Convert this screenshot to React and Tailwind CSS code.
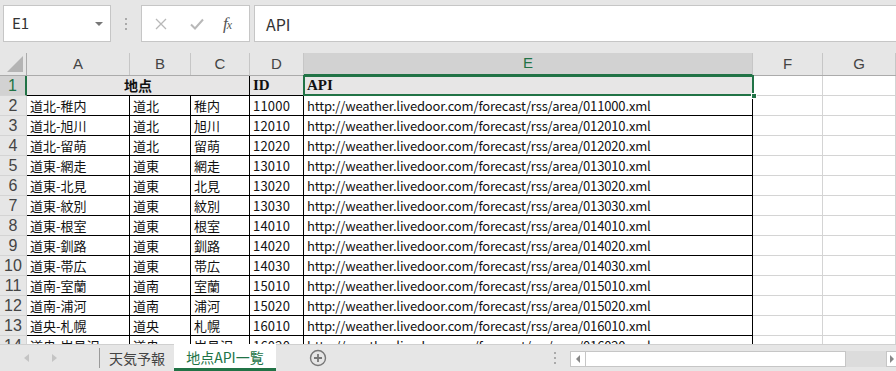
const COLS = [
  { key: 'A', w: 'w-[103px]' },
  { key: 'B', w: 'w-[61px]' },
  { key: 'C', w: 'w-[59px]' },
  { key: 'D', w: 'w-[54px]' },
  { key: 'E', w: 'w-[449px]' },
  { key: 'F', w: 'w-[70px]' },
  { key: 'G', w: 'flex-1' },
];

const ROWS = [
  ['道北-稚内', '道北', '稚内', '11000'],
  ['道北-旭川', '道北', '旭川', '12010'],
  ['道北-留萌', '道北', '留萌', '12020'],
  ['道東-網走', '道東', '網走', '13010'],
  ['道東-北見', '道東', '北見', '13020'],
  ['道東-紋別', '道東', '紋別', '13030'],
  ['道東-根室', '道東', '根室', '14010'],
  ['道東-釧路', '道東', '釧路', '14020'],
  ['道東-帯広', '道東', '帯広', '14030'],
  ['道南-室蘭', '道南', '室蘭', '15010'],
  ['道南-浦河', '道南', '浦河', '15020'],
  ['道央-札幌', '道央', '札幌', '16010'],
  ['道央-岩見沢', '道央', '岩見沢', '16020'],
];

const url = (id) => `http://weather.livedoor.com/forecast/rss/area/0${id}.xml`;

const FormulaBar = () => (
  <div className="h-[53px] shrink-0 bg-[#e6e6e6] flex items-start pt-[5px]">
    {/* Name box */}
    <div className="relative ml-[3px] w-[108px] h-[37px] bg-white border border-[#c6c6c6] flex items-center pl-[8px] text-[15px] text-[#333]">
      E1
      <div className="absolute right-[7px] top-[16px] w-0 h-0 border-l-[4px] border-r-[4px] border-t-[4px] border-l-transparent border-r-transparent border-t-[#777]" />
    </div>
    {/* grip dots */}
    <div className="ml-[14px] mt-[13px] flex flex-col gap-[3px]">
      <span className="w-[2px] h-[2px] bg-[#aaa]" />
      <span className="w-[2px] h-[2px] bg-[#aaa]" />
      <span className="w-[2px] h-[2px] bg-[#aaa]" />
    </div>
    {/* cancel / enter / fx */}
    <div className="ml-[14px] w-[109px] h-[37px] bg-white border border-[#c6c6c6] flex items-center">
      <svg width="12" height="12" viewBox="0 0 12 12" className="ml-[13px]">
        <path d="M1 1 L11 11 M11 1 L1 11" stroke="#b8b8b8" strokeWidth="1.3" fill="none" />
      </svg>
      <svg width="14" height="12" viewBox="0 0 14 12" className="ml-[23px]">
        <path d="M1 6.5 L5 10.5 L13 1.5" stroke="#b8b8b8" strokeWidth="2" fill="none" />
      </svg>
      <span className="ml-[19px] text-[17px] italic text-[#555] font-['Liberation_Serif',serif] tracking-[-1px] leading-none">
        f<span className="text-[12px]">x</span>
      </span>
    </div>
    <div className="ml-[4px] flex-1 -mr-[2px] h-[37px] bg-white border border-[#c6c6c6] flex items-center pl-[11px] text-[16px] text-[#333]">
      API
    </div>
  </div>
);

const HeaderRow = () => (
  <div className="h-[23px] shrink-0 flex bg-[#e6e6e6] border-b border-[#ababab] text-[15px] text-[#444] font-['Liberation_Sans',sans-serif]">
    <div className="relative w-[27px] border-r border-[#ababab]">
      <div className="absolute right-[3px] bottom-[3px] w-0 h-0" style={{ borderBottom: '16px solid #b4b4b4', borderLeft: '16px solid transparent' }} />
    </div>
    {COLS.map((c) => (
      <div
        key={c.key}
        className={`${c.w} flex items-center justify-center border-r border-[#c6c6c6] ${
          c.key === 'E' ? 'bg-[#d2d2d2] text-[#217346] border-b-2 border-b-[#217346] -mb-[1px]' : ''
        }`}
      >
        {c.key}
      </div>
    ))}
  </div>
);

const RowHead = ({ n, active }) => (
  <div
    className={`w-[27px] shrink-0 flex items-center justify-center border-b border-[#d4d4d4] text-[16px] font-['Liberation_Sans',sans-serif] ${
      active ? 'bg-[#d2d2d2] text-[#217346] border-r-2 border-r-[#217346]' : 'bg-[#e6e6e6] text-[#444] border-r border-[#ababab]'
    }`}
  >
    {n}
  </div>
);

const Cell = ({ w, children, className = '' }) => (
  <div className={`${w} shrink-0 flex items-center pl-[3px] whitespace-nowrap overflow-hidden border-r border-b border-black ${className}`}>
    {children}
  </div>
);

const Blank = ({ w }) => <div className={`${w} shrink-0 border-r border-b border-[#d4d4d4]`} />;

const Sheet = () => (
  <div className="flex-1 flex flex-col overflow-hidden bg-white">
    <HeaderRow />
    {/* row 1 */}
    <div className="h-[20px] shrink-0 flex text-[#111]">
      <RowHead n={1} active />
      <div className="w-[223px] shrink-0 flex items-center justify-center bg-[#e7e6e6] border-r border-b border-black font-bold text-[14px]">
        地点
      </div>
      <div className="w-[54px] shrink-0 flex items-center pl-[3px] bg-[#e7e6e6] border-r border-b border-black font-bold text-[15px] font-['Liberation_Serif',serif]">
        ID
      </div>
      <div className="relative w-[449px] shrink-0 flex items-center pl-[3px] bg-[#e7e6e6] border-b border-black font-bold text-[15px] font-['Liberation_Serif',serif]">
        API
        <div className="absolute -left-[1px] -top-[1px] -right-[1px] -bottom-[1px] border-2 border-[#217346]" />
        <div className="absolute -right-[4px] -bottom-[4px] w-[6px] h-[6px] bg-[#217346] border border-white" />
      </div>
      <Blank w="w-[70px]" />
      <Blank w="flex-1" />
    </div>
    {ROWS.map((r, i) => (
      <div key={i} className="h-[20px] shrink-0 flex text-[13px] text-[#111]">
        <RowHead n={i + 2} />
        <Cell w="w-[103px]">{r[0]}</Cell>
        <Cell w="w-[61px]">{r[1]}</Cell>
        <Cell w="w-[59px]">{r[2]}</Cell>
        <Cell w="w-[54px]" className="tracking-[0.2px]">{r[3]}</Cell>
        <Cell w="w-[449px]" className="tracking-[-0.15px]">{url(r[3])}</Cell>
        <Blank w="w-[70px]" />
        <Blank w="flex-1" />
      </div>
    ))}
  </div>
);

const TabBar = () => (
  <div className="h-[27px] shrink-0 bg-[#e6e6e6] flex items-stretch border-t border-[#d0d0d0] font-['Noto_Sans_CJK_JP',sans-serif]">
    <div className="w-[99px] flex items-center">
      <span className="ml-[24px] w-0 h-0 border-t-[4px] border-b-[4px] border-r-[5px] border-t-transparent border-b-transparent border-r-[#c4c4c4]" />
      <span className="ml-[23px] w-0 h-0 border-t-[4px] border-b-[4px] border-l-[5px] border-t-transparent border-b-transparent border-l-[#c4c4c4]" />
    </div>
    <div className="my-[3px] w-px bg-[#9a9a9a]" />
    <div className="w-[74px] flex items-center justify-center text-[14px] text-[#444]">天気予報</div>
    <div className="w-[102px] -mt-[1px] bg-white flex items-center justify-center text-[14px] text-[#217346] border-b-[3px] border-[#217346] pt-[2px]">
      地点API一覧
    </div>
    <div className="ml-[33px] flex items-center">
      <svg width="18" height="18" viewBox="0 0 18 18">
        <circle cx="9" cy="9" r="7.5" stroke="#777" strokeWidth="1.4" fill="none" />
        <path d="M9 5 V13 M5 9 H13" stroke="#777" strokeWidth="1.8" />
      </svg>
    </div>
    <div className="ml-[227px] flex flex-col justify-center gap-[3px]">
      <span className="w-[2px] h-[2px] bg-[#aaa]" />
      <span className="w-[2px] h-[2px] bg-[#aaa]" />
      <span className="w-[2px] h-[2px] bg-[#aaa]" />
    </div>
    <div className="ml-[14px] mt-[6px] h-[16px] w-[276px] bg-white border border-[#c6c6c6] flex">
      <div className="w-[15px] border-r border-[#c6c6c6] flex items-center justify-center">
        <span className="w-0 h-0 border-t-[4px] border-b-[4px] border-r-[4px] border-t-transparent border-b-transparent border-r-[#888]" />
      </div>
    </div>
    <div className="flex-1 mt-[6px] h-[16px] bg-[#dcdcdc] flex justify-end">
      <div className="w-[10px] bg-white border border-[#c6c6c6] border-r-0 flex items-center justify-center">
        <span className="w-0 h-0 border-t-[4px] border-b-[4px] border-l-[4px] border-t-transparent border-b-transparent border-l-[#888]" />
      </div>
    </div>
  </div>
);

export default function App() {
  return (
    <div className="w-[896px] h-[371px] overflow-hidden flex flex-col bg-[#e6e6e6] font-['Noto_Sans_CJK_JP',sans-serif]">
      <FormulaBar />
      <Sheet />
      <TabBar />
    </div>
  );
}
